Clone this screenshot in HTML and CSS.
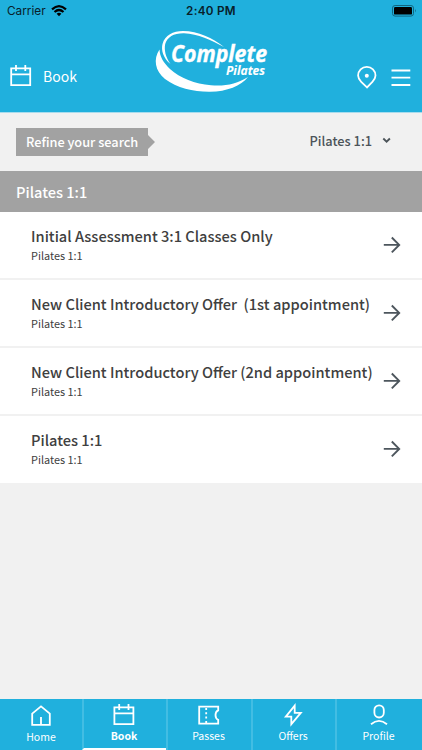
FILE: index.html
```html
<!DOCTYPE html>
<html lang="en">
<head>
<meta charset="utf-8">
<title>Book</title>
<link rel="stylesheet" href="styles.css">
</head>
<body>
<div class="app">
  <header class="header">
    <div class="status">
      <div class="carrier">
        <span>Carrier</span>
        <svg class="wifi" width="16" height="12" viewBox="0 0 16 12" fill="none" stroke="#000" stroke-width="2.2"><path d="M1 4.4Q8-2 15 4.4M3.5 7Q8 3 12.5 7"/><path d="M5.6 8.8Q8 6.8 10.4 8.8L8 11.3Z" fill="#000" stroke="none"/></svg>
      </div>
      <span class="clock">2:40 PM</span>
      <svg class="battery" width="25" height="12" viewBox="0 0 25 12"><rect x=".5" y=".5" width="21" height="10.6" rx="2.6" fill="none" stroke="#116680"/><rect x="2" y="2" width="18" height="7.6" rx="1.2"/><path d="M23 4Q24.7 5.8 23 7.6Z" fill="#116680"/></svg>
    </div>
    <div class="nav">
      <div class="nav-title">
        <svg width="22" height="22" viewBox="0 0 22 22" class="line"><path d="M1.2 3.4H20.2V20.2H1.2ZM1.2 9.4H20.2M6 0V6M15.3 0V6"/></svg>
        <span>Book</span>
      </div>
      <svg class="logo" width="118" height="66" viewBox="0 0 118 66">
        <path d="M16.5 34C9 28 7 20 8.500 14C11 5 19 1 29 1C44 1 59 8 70 17C57 10 44 4 30 3.200C20 3 13 7 11.200 14C10 20 11.500 27 16.500 34Z" fill="#fff"/>
        <path d="M5.500 19.500C-1 29 1 41 11 49C23 58 40 62 56 61.800C73 61.500 87 56 94 47C83 54 71 56.500 57 55.300C41 54 26 48 16 39C9 32 6 27 5.500 19.500Z" fill="#fff"/>
        <text class="logo-main" x="17" y="32" textLength="96" lengthAdjust="spacingAndGlyphs">Complete</text>
        <text class="logo-sub" x="72" y="45" textLength="39" lengthAdjust="spacingAndGlyphs">Pilates</text>
      </svg>
      <div class="nav-actions">
        <svg width="20" height="23" viewBox="0 0 20 23" class="line"><path d="M10 21.4L4.2 15.8C1.8 13.4 1.1 11.8 1.1 9.6A8.7 8.7 0 0 1 18.500 9.6C18.500 11.8 17.8 13.4 15.4 15.8Z"/><circle cx="9.8" cy="9.7" r="2" fill="#fff" stroke="none"/></svg>
        <svg width="20" height="18" viewBox="0 0 20 18" class="line"><path d="M.5 1.5H19.3M.5 8.7H19.3M.5 16H19.3"/></svg>
      </div>
    </div>
  </header>
  <section class="filter">
    <span class="tag">Refine your search</span>
    <div class="select"><span>Pilates 1:1</span><svg width="9" height="7" viewBox="0 0 9 7"><path d="M1.3 1.5L4.6 4.6L7.9 1.5" fill="none" stroke="#4c5459" stroke-width="1.9"/></svg></div>
  </section>
  <h2 class="group">Pilates 1:1</h2>
  <main class="list">
    <div class="row"><div><h3>Initial Assessment 3:1 Classes Only</h3><p>Pilates 1:1</p></div><svg class="arrow" width="18" height="18" viewBox="0 0 18 18"><path d="M.8 8.9H16M8.8 1.5L16.2 8.9L8.8 16.3"/></svg></div>
    <div class="row"><div><h3>New Client Introductory Offer&nbsp; (1st appointment)</h3><p>Pilates 1:1</p></div><svg class="arrow" width="18" height="18" viewBox="0 0 18 18"><path d="M.8 8.9H16M8.8 1.5L16.2 8.9L8.8 16.3"/></svg></div>
    <div class="row"><div><h3>New Client Introductory Offer (2nd appointment)</h3><p>Pilates 1:1</p></div><svg class="arrow" width="18" height="18" viewBox="0 0 18 18"><path d="M.8 8.9H16M8.8 1.5L16.2 8.9L8.8 16.3"/></svg></div>
    <div class="row"><div><h3>Pilates 1:1</h3><p>Pilates 1:1</p></div><svg class="arrow" width="18" height="18" viewBox="0 0 18 18"><path d="M.8 8.9H16M8.8 1.5L16.2 8.9L8.8 16.3"/></svg></div>
  </main>
  <nav class="tabs">
    <div class="tab home"><svg width="22" height="22" viewBox="0 0 22 22" class="line"><path d="M2.2 8.6L11 1.4L19.8 8.6V19.8H2.2ZM11 19.8V12"/></svg><span>Home</span></div>
    <div class="tab active"><svg width="22" height="22" viewBox="0 0 22 22" class="line"><path d="M1.4 3.4H20.4V20.2H1.4ZM1.4 9.4H20.4M6.2 0V6M15.5 0V6"/></svg><span>Book</span></div>
    <div class="tab"><svg width="22" height="22" viewBox="0 0 22 22" class="line"><path d="M1.2 2.6H20.2V6.3C16.6 7.7 16.6 14.5 20.2 15.9V19.6H1.2Z"/><path d="M8.2 4V19" stroke-dasharray="2 2.3"/></svg><span>Passes</span></div>
    <div class="tab"><svg width="22" height="24" viewBox="0 0 22 24" class="line bolt"><path d="M12.7 2.6L3.800 13.600H9.300V21.200L18.800 9.900H12.700Z"/></svg><span>Offers</span></div>
    <div class="tab"><svg width="22" height="22" viewBox="0 0 22 22" class="line"><rect x="6.4" y="1.3" width="9.4" height="12.2" rx="4.7"/><path d="M3 20.3Q11 13.5 19 20.3"/></svg><span>Profile</span></div>
  </nav>
</div>
</body>
</html>
```
FILE: styles.css
```css
* { box-sizing: border-box; }
body { margin: 0; font-family: "Noto Sans CJK SC", "Noto Sans", sans-serif; }
h2, h3, p { margin: 0; }
svg { display: block; flex: none; }
.app { width: 422px; height: 750px; display: flex; flex-direction: column; background: #f1f1f1; overflow: hidden; }
.header { height: 112px; flex: none; background: #20b0dd; color: #fff; }
.line { fill: none; stroke: #fff; stroke-width: 1.8; }
.status { height: 22px; display: grid; grid-template-columns: 1fr auto 1fr; align-items: center; padding: 0 7px; color: #08202a; font-family: Inter, sans-serif; font-size: 11.8px; }
.carrier { display: flex; align-items: center; gap: 5px; }
.clock { font-weight: 600; font-size: 11.7px; letter-spacing: .3px; }
.battery { justify-self: end; margin-right: -2px; }
.nav { height: 90px; display: grid; grid-template-columns: 143.5px 118px 1fr; padding: 0 11px 0 10px; }
.nav-title { display: flex; align-items: center; gap: 11px; height: 22px; margin-top: 43px; font-size: 14px; line-height: 22px; }
.logo { margin-top: 8px; overflow: visible; }
.logo-main, .logo-sub { font-family: "Open Sans", sans-serif; font-weight: 700; font-style: italic; fill: #fff; stroke: #fff; stroke-width: .4px; }
.logo-main { font-size: 24px; }
.logo-sub { font-size: 13px; stroke-width: .1px; }
.nav-actions { display: flex; justify-content: flex-end; gap: 14px; align-items: center; height: 23px; margin-top: 44px; }
.filter { height: 59px; flex: none; display: flex; justify-content: space-between; padding: 15px 31px 0 16px; border-top: 1px solid #a9dced; }
.tag { width: 139px; height: 28px; background: #a2a2a2; clip-path: polygon(0 0, 132px 0, 132px 7px, 139px 14px, 132px 21px, 132px 28px, 0 28px); color: #fff; font-size: 12.75px; font-weight: 500; line-height: 27px; padding-left: 10px; white-space: nowrap; }
.select { display: flex; align-items: center; gap: 10px; height: 24px; color: #4c5459; font-size: 12.8px; font-weight: 500; }
.group { height: 41px; flex: none; background: #a2a2a2; color: #fff; font-size: 14.6px; font-weight: 500; line-height: 41px; padding-left: 16px; }
.list { display: flex; flex-direction: column; gap: 2px; }
.row { height: 66px; background: #fff; display: flex; justify-content: space-between; align-items: center; padding: 0 21px 0 31px; color: #404040; }
.row:last-child { height: 67px; padding-bottom: 1px; }
.row h3 { font-size: 14.64px; font-weight: 500; line-height: 22px; white-space: pre; }
.row p { font-size: 10.9px; line-height: 17px; }
.row > div { height: 40px; }
.arrow { fill: none; stroke: #4d565d; stroke-width: 1.9; }
.tabs { margin-top: auto; height: 51px; display: grid; grid-template-columns: 82px 84px 85px 84px 87px; background: #20b0dd; color: #fff; }
.tab { display: flex; flex-direction: column; align-items: center; padding: 5px 2px 0 0; font-size: 10.5px; line-height: 15px; border-left: 2px solid #42bde3; }
.tab span { margin-top: 2px; }
.tab .bolt { margin: -1px 0; }
.home { border-left: 0; padding: 6px 0 0; }
.active { font-weight: 700; border-bottom: 2px solid #fff; }
```
